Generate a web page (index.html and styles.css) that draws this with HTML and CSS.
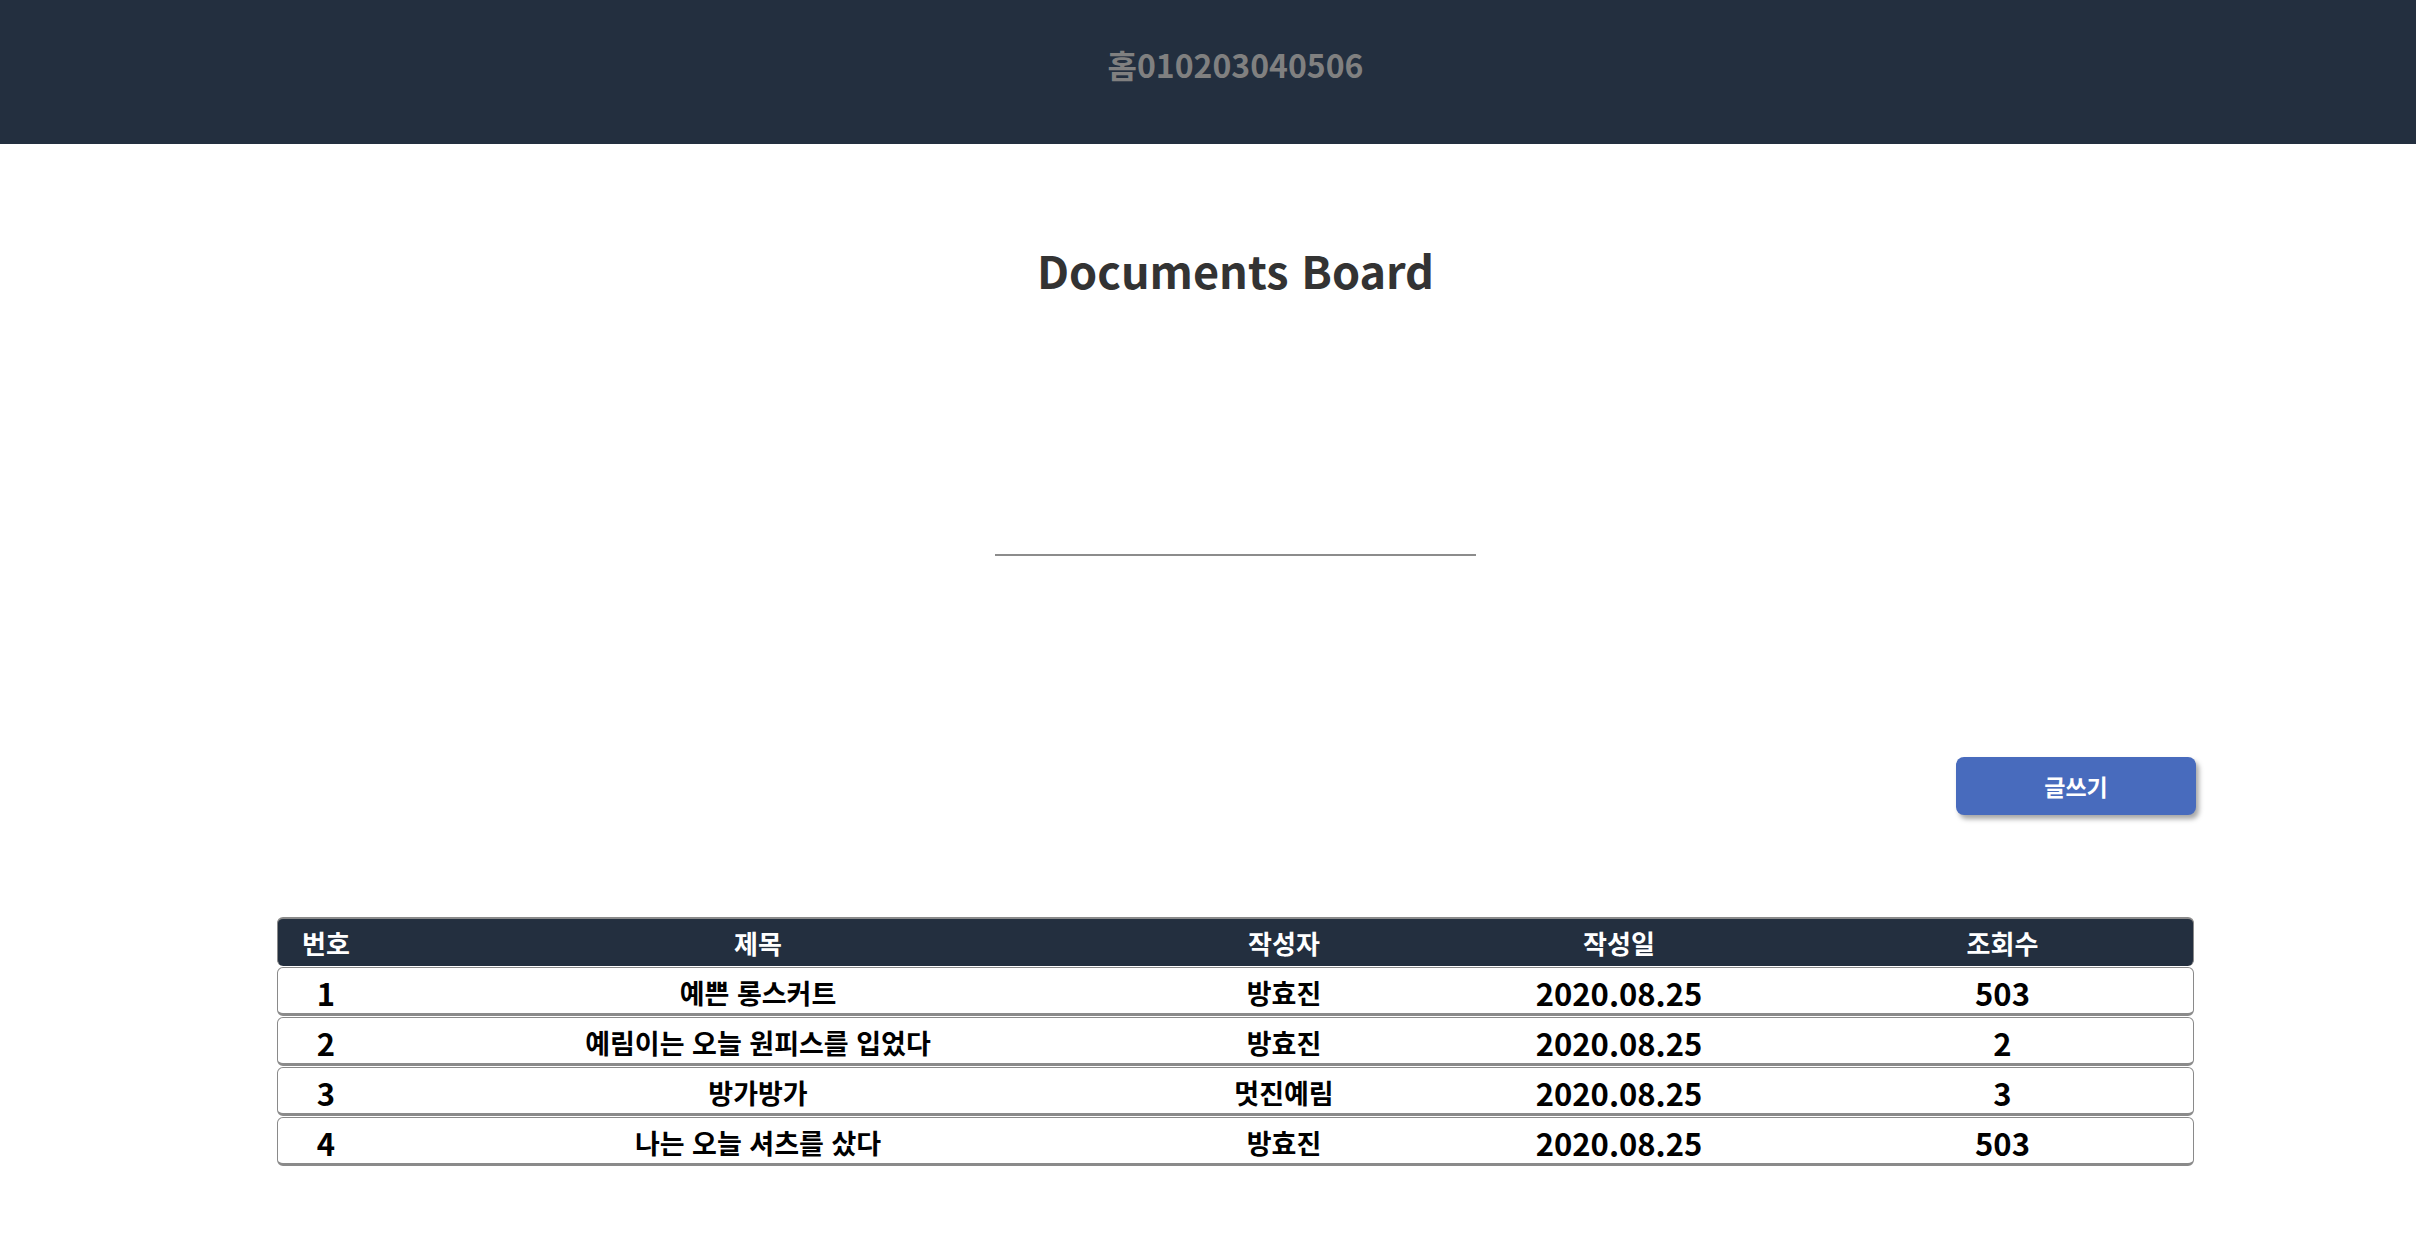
FILE: index.html
```html
<!DOCTYPE html>
<html lang="ko">
<head>
<meta charset="utf-8">
<title>Documents Board</title>
<link rel="stylesheet" href="styles.css">
</head>
<body>
<header class="topbar">
  <nav class="topnav">홈010203040506</nav>
</header>
<main class="main">
  <h1 class="title">Documents Board</h1>
  <div class="search">
    <input class="search-input" type="text" aria-label="검색">
  </div>
  <div class="board">
    <div class="actions">
      <button class="write-btn" type="button">글쓰기</button>
    </div>
    <div class="list">
      <div class="row head">
        <div class="cell">번호</div>
        <div class="cell">제목</div>
        <div class="cell">작성자</div>
        <div class="cell">작성일</div>
        <div class="cell">조회수</div>
      </div>
      <div class="row">
        <div class="cell num">1</div>
        <div class="cell">예쁜 롱스커트</div>
        <div class="cell">방효진</div>
        <div class="cell num">2020.08.25</div>
        <div class="cell num">503</div>
      </div>
      <div class="row">
        <div class="cell num">2</div>
        <div class="cell">예림이는 오늘 원피스를 입었다</div>
        <div class="cell">방효진</div>
        <div class="cell num">2020.08.25</div>
        <div class="cell num">2</div>
      </div>
      <div class="row">
        <div class="cell num">3</div>
        <div class="cell">방가방가</div>
        <div class="cell">멋진예림</div>
        <div class="cell num">2020.08.25</div>
        <div class="cell num">3</div>
      </div>
      <div class="row">
        <div class="cell num">4</div>
        <div class="cell">나는 오늘 셔츠를 샀다</div>
        <div class="cell">방효진</div>
        <div class="cell num">2020.08.25</div>
        <div class="cell num">503</div>
      </div>
    </div>
  </div>
</main>
</body>
</html>
```
FILE: styles.css
```css
* {
  box-sizing: border-box;
}

html, body {
  margin: 0;
  padding: 0;
  background: #ffffff;
}

body {
  font-family: "Noto Sans CJK KR", "Noto Sans", sans-serif;
  color: #000;
}

.topbar {
  height: 144px;
  background: #232f3f;
  padding-left: 55px;
  display: flex;
  align-items: center;
  justify-content: center;
}

.topnav {
  font-size: 32px;
  font-weight: 700;
  color: #808080;
  line-height: 1;
  margin-top: -16px;
}

.main {
  padding-left: 55px;
  display: flex;
  flex-direction: column;
  align-items: center;
}

.title {
  margin: 96px 0 0;
  font-size: 45px;
  line-height: 60px;
  font-weight: 700;
  color: #333333;
}

.search {
  margin-top: 216px;
}

.search-input {
  display: block;
  width: 481px;
  height: 40px;
  border: none;
  border-bottom: 2px solid #8c8c8c;
  outline: none;
  background: transparent;
  font-size: 22px;
}

.board {
  width: 1917px;
  margin-top: 201px;
}

.actions {
  display: flex;
  justify-content: flex-end;
}

.write-btn {
  width: 240px;
  height: 58px;
  margin-right: -2px;
  border: none;
  border-radius: 8px;
  background: #486bbd;
  color: #ffffff;
  font-family: "Noto Sans CJK KR", sans-serif;
  font-size: 23px;
  font-weight: 700;
  box-shadow: 3px 4px 5px rgba(0, 0, 0, 0.35);
}

.list {
  margin-top: 102px;
  display: flex;
  flex-direction: column;
  gap: 1px;
}

.row {
  display: grid;
  grid-template-columns: 96px 768px 284px 386px 1fr;
  align-items: center;
  height: 49px;
  border: 1px solid #8a8a8a;
  border-bottom-width: 3px;
  border-radius: 6px;
  background: #ffffff;
}

.row.head {
  background: #232f3f;
  border-top-width: 2px;
  border-bottom-width: 0;
  border-color: #8a8a8a;
  height: 49px;
}

.cell {
  text-align: center;
  font-size: 27px;
  font-weight: 700;
  line-height: 1;
  color: #000;
  white-space: nowrap;
  padding-top: 4px;
}

.row.head .cell {
  color: #ffffff;
  font-size: 26px;
  padding-top: 0;
}

.cell.num {
  font-size: 31px;
}
```
